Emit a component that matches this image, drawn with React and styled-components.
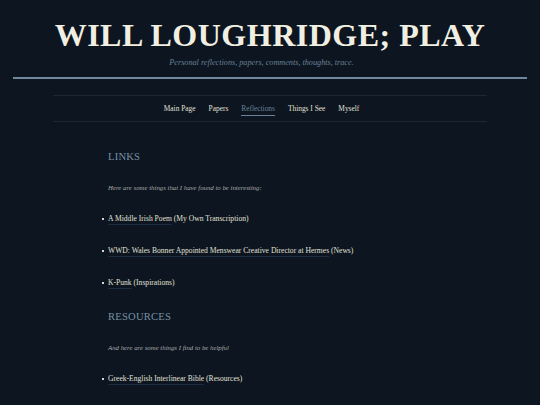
import React from "react";
import styled, { createGlobalStyle } from "styled-components";

const GlobalStyle = createGlobalStyle`
  html, body {
    margin: 0;
    padding: 0;
    background: #0c1520;
  }
  body {
    font-family: "Liberation Serif", "Times New Roman", serif;
    color: #e4e2d8;
  }
`;

const navItems = ["Main Page", "Papers", "Reflections", "Things I See", "Myself"];

const sections = [
  {
    title: "Links",
    intro: "Here are some things that I have found to be interesting:",
    items: [
      { link: "A Middle Irish Poem", note: "(My Own Transcription)" },
      {
        link: "WWD: Wales Bonner Appointed Menswear Creative Director at Hermes",
        note: "(News)",
      },
      { link: "K-Punk", note: "(Inspirations)" },
    ],
  },
  {
    title: "Resources",
    intro: "And here are some things I find to be helpful",
    items: [{ link: "Greek-English Interlinear Bible", note: "(Resources)" }],
  },
];

const App = () => {
  return (
    <>
      <GlobalStyle />
      <Header>
        <Title>WILL LOUGHRIDGE; PLAY</Title>
        <Tagline>Personal reflections, papers, comments, thoughts, trace.</Tagline>
      </Header>
      <Rule />
      <Nav>
        {navItems.map((item) => (
          <NavLink key={item} $active={item === "Reflections"}>
            {item}
          </NavLink>
        ))}
      </Nav>
      <Main>
        {sections.map((s) => (
          <Section key={s.title}>
            <Heading>{s.title}</Heading>
            <Intro>{s.intro}</Intro>
            <List>
              {s.items.map((it) => (
                <Item key={it.link}>
                  <ItemLink>{it.link}</ItemLink> {it.note}
                </Item>
              ))}
            </List>
          </Section>
        ))}
      </Main>
    </>
  );
};

const Header = styled.header`
  padding-top: 17px;
  text-align: center;
`;

const Title = styled.h1`
  margin: 0;
  font-size: 32px;
  line-height: 36px;
  font-weight: bold;
  letter-spacing: 0.5px;
  color: #f1efe2;
`;

const Tagline = styled.p`
  margin: 4px 0 0;
  padding-right: 17px;
  font-size: 8.2px;
  line-height: 12px;
  font-style: italic;
  color: #6a8297;
`;

const Rule = styled.hr`
  margin: 8px 13px 0;
  border: none;
  height: 2px;
  background: #6f889c;
`;

const Nav = styled.nav`
  margin: 16px 53px 0;
  padding-right: 17px;
  height: 25px;
  border-top: 1px solid #1c2734;
  border-bottom: 1px solid #1c2734;
  display: flex;
  justify-content: center;
  align-items: center;
  gap: 13px;
`;

const NavLink = styled.a`
  font-size: 7.4px;
  line-height: 12px;
  color: ${(props) => (props.$active ? "#6b8398" : "#e2e0d6")};
  border-bottom: 1px solid
    ${(props) => (props.$active ? "#6b8398" : "transparent")};
  padding-top: 1px;
  cursor: pointer;
`;

const Main = styled.main`
  padding: 28px 0 0 108px;
`;

const Section = styled.section`
  margin-bottom: 22px;
`;

const Heading = styled.h2`
  margin: 0;
  font-size: 10.6px;
  line-height: 14px;
  font-weight: normal;
  text-transform: uppercase;
  letter-spacing: 0.2px;
  color: #7890a5;
`;

const Intro = styled.p`
  margin: 19px 0 0;
  font-size: 6.8px;
  line-height: 10px;
  font-style: italic;
  color: #a7aaa8;
`;

const List = styled.ul`
  margin: 20px 0 0;
  padding: 0;
  list-style: none;
  display: flex;
  flex-direction: column;
  gap: 21px;
`;

const Item = styled.li`
  position: relative;
  font-size: 7.6px;
  line-height: 11px;
  color: #e2e0d6;

  &::before {
    content: "";
    position: absolute;
    left: -6px;
    top: 5px;
    width: 2px;
    height: 2px;
    background: #d8d6cc;
  }
`;

const ItemLink = styled.a`
  border-bottom: 1px solid #1d2b40;
  padding-bottom: 1px;
  cursor: pointer;
`;

export default App;
